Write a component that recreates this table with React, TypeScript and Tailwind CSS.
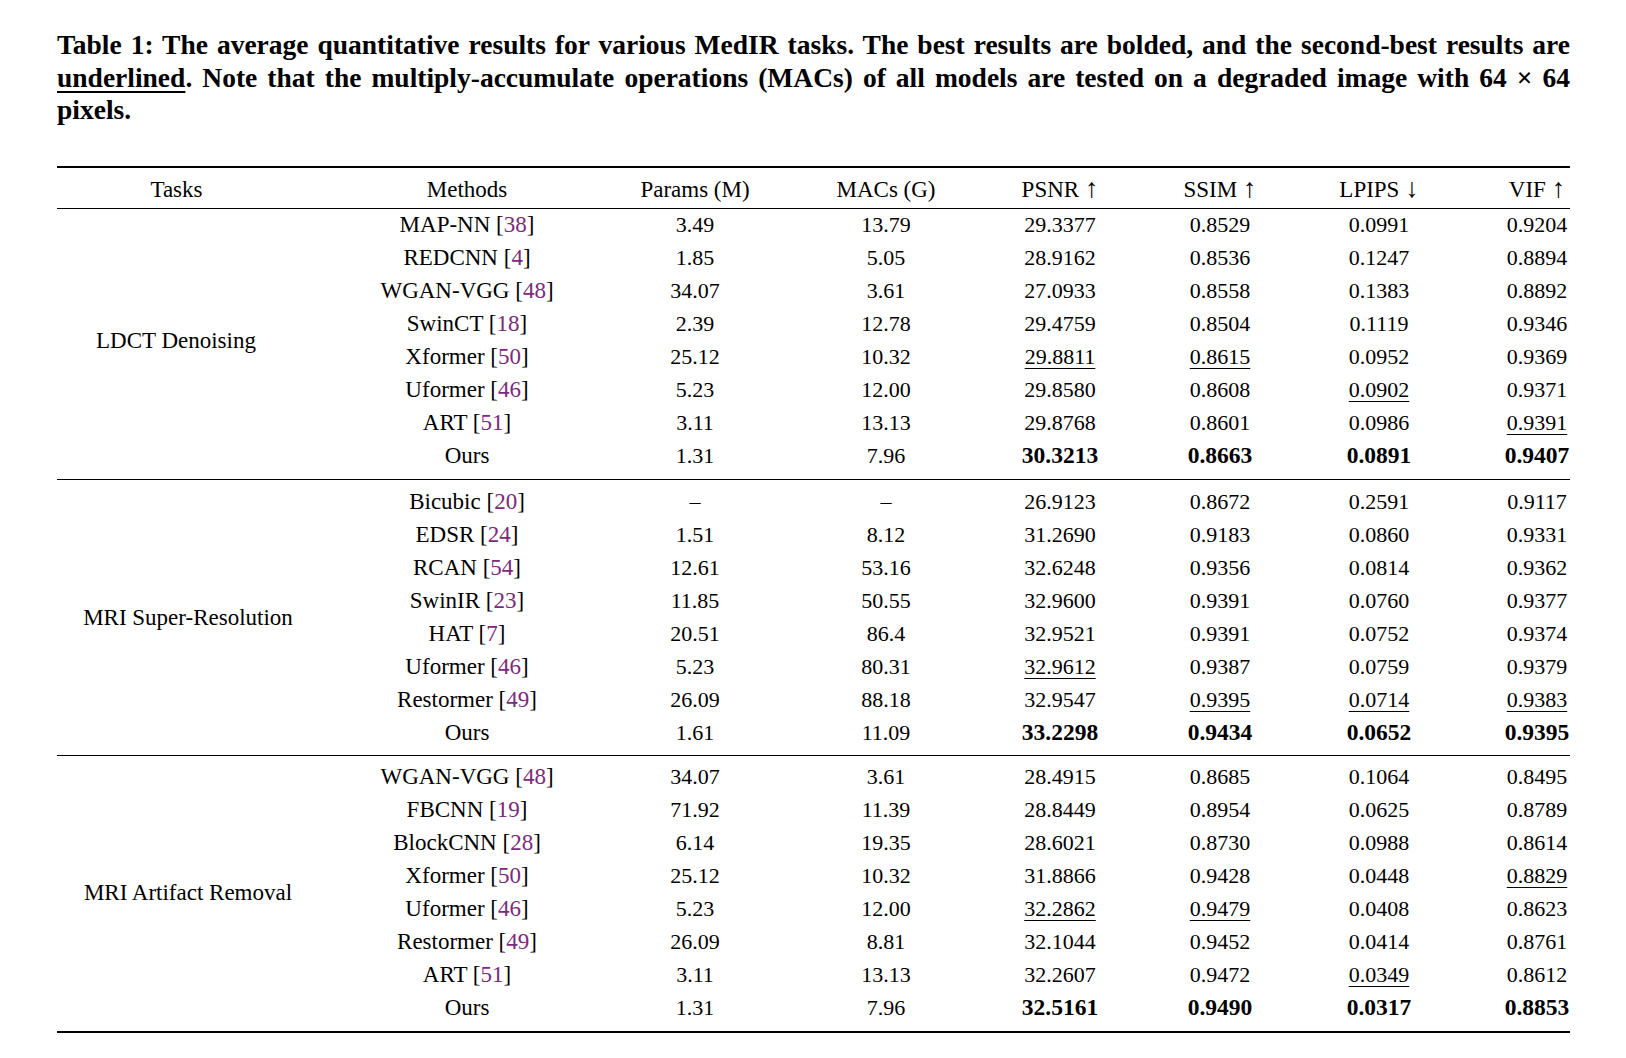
import React from "react";

type Row = { m: string; c?: string; v: string[] };
type Group = { task: string; shift: string; pad: string; rows: Row[] };

const groups: Group[] = [
  {
    task: "LDCT Denoising",
    shift: "pr-[12px]",
    pad: "pb-[6px]",
    rows: [
      { m: "MAP-NN", c: "38", v: ["3.49", "13.79", "29.3377", "0.8529", "0.0991", "0.9204"] },
      { m: "REDCNN", c: "4", v: ["1.85", "5.05", "28.9162", "0.8536", "0.1247", "0.8894"] },
      { m: "WGAN-VGG", c: "48", v: ["34.07", "3.61", "27.0933", "0.8558", "0.1383", "0.8892"] },
      { m: "SwinCT", c: "18", v: ["2.39", "12.78", "29.4759", "0.8504", "0.1119", "0.9346"] },
      { m: "Xformer", c: "50", v: ["25.12", "10.32", "_29.8811", "_0.8615", "0.0952", "0.9369"] },
      { m: "Uformer", c: "46", v: ["5.23", "12.00", "29.8580", "0.8608", "_0.0902", "0.9371"] },
      { m: "ART", c: "51", v: ["3.11", "13.13", "29.8768", "0.8601", "0.0986", "_0.9391"] },
      { m: "Ours", v: ["1.31", "7.96", "*30.3213", "*0.8663", "*0.0891", "*0.9407"] },
    ],
  },
  {
    task: "MRI Super-Resolution",
    shift: "pl-[12px]",
    pad: "pt-[6px] pb-[5px]",
    rows: [
      { m: "Bicubic", c: "20", v: ["–", "–", "26.9123", "0.8672", "0.2591", "0.9117"] },
      { m: "EDSR", c: "24", v: ["1.51", "8.12", "31.2690", "0.9183", "0.0860", "0.9331"] },
      { m: "RCAN", c: "54", v: ["12.61", "53.16", "32.6248", "0.9356", "0.0814", "0.9362"] },
      { m: "SwinIR", c: "23", v: ["11.85", "50.55", "32.9600", "0.9391", "0.0760", "0.9377"] },
      { m: "HAT", c: "7", v: ["20.51", "86.4", "32.9521", "0.9391", "0.0752", "0.9374"] },
      { m: "Uformer", c: "46", v: ["5.23", "80.31", "_32.9612", "0.9387", "0.0759", "0.9379"] },
      { m: "Restormer", c: "49", v: ["26.09", "88.18", "32.9547", "_0.9395", "_0.0714", "_0.9383"] },
      { m: "Ours", v: ["1.61", "11.09", "*33.2298", "*0.9434", "*0.0652", "*0.9395"] },
    ],
  },
  {
    task: "MRI Artifact Removal",
    shift: "pl-[12px]",
    pad: "pt-[5px] pb-[6px]",
    rows: [
      { m: "WGAN-VGG", c: "48", v: ["34.07", "3.61", "28.4915", "0.8685", "0.1064", "0.8495"] },
      { m: "FBCNN", c: "19", v: ["71.92", "11.39", "28.8449", "0.8954", "0.0625", "0.8789"] },
      { m: "BlockCNN", c: "28", v: ["6.14", "19.35", "28.6021", "0.8730", "0.0988", "0.8614"] },
      { m: "Xformer", c: "50", v: ["25.12", "10.32", "31.8866", "0.9428", "0.0448", "_0.8829"] },
      { m: "Uformer", c: "46", v: ["5.23", "12.00", "_32.2862", "_0.9479", "0.0408", "0.8623"] },
      { m: "Restormer", c: "49", v: ["26.09", "8.81", "32.1044", "0.9452", "0.0414", "0.8761"] },
      { m: "ART", c: "51", v: ["3.11", "13.13", "32.2607", "0.9472", "_0.0349", "0.8612"] },
      { m: "Ours", v: ["1.31", "7.96", "*32.5161", "*0.9490", "*0.0317", "*0.8853"] },
    ],
  },
];

// column widths & margins for columns 2..8 (column 1 is 250px)
const colCls = [
  "w-[280px] ml-[20px]",
  "w-[140px] ml-[18px]",
  "w-[140px] ml-[51px]",
  "w-[120px] ml-[44px]",
  "w-[120px] ml-[40px]",
  "w-[120px] ml-[39px]",
  "w-[66px] ml-[65px]",
];

function Val({ s }: { s: string }) {
  if (s.startsWith("_")) {
    return (
      <span className="text-[22px] underline decoration-1 underline-offset-[4px]">{s.slice(1)}</span>
    );
  }
  if (s.startsWith("*")) {
    return <span className="text-[23.5px] font-bold">{s.slice(1)}</span>;
  }
  return <span className="text-[22px]">{s}</span>;
}

function Cells({ cells }: { cells: React.ReactNode[] }) {
  return (
    <>
      {cells.map((c, i) => (
        <div key={i} className={`${colCls[i]} shrink-0 text-center whitespace-nowrap`}>
          {c}
        </div>
      ))}
    </>
  );
}

function Head({ t, a }: { t: string; a: string }) {
  return (
    <span>
      {t} <span className="text-[27px] leading-[0px] font-light">{a}</span>
    </span>
  );
}

export default function App() {
  return (
    <div
      className="w-[1626px] h-[1058px] bg-white text-black overflow-hidden"
      style={{ fontFamily: '"Liberation Serif", "Times New Roman", serif' }}
    >
      <div className="pl-[57px] w-[1570px]">
        {/* Caption */}
        <div className="pt-[29px] text-[27.5px] leading-[32.5px] font-bold">
          <div className="text-justify [text-align-last:justify]">
            Table 1: The average quantitative results for various MedIR tasks. The best results are bolded, and the second-best results are
          </div>
          <div className="text-justify [text-align-last:justify]">
            <span className="underline decoration-[1.5px] underline-offset-[4px]">underlined</span>. Note that the multiply-accumulate operations (MACs) of all models are tested on a degraded image with 64 × 64
          </div>
          <div>pixels.</div>
        </div>

        {/* Table */}
        <div className="mt-[39px] text-[23px] leading-[33px]">
          <div className="h-[2px] bg-black" />
          <div className="flex pt-[5px] h-[40px]">
            <div className="w-[250px] shrink-0 text-center pr-[11px]">Tasks</div>
            <Cells
              cells={[
                "Methods",
                "Params (M)",
                "MACs (G)",
                <Head key="p" t="PSNR" a="↑" />,
                <Head key="s" t="SSIM" a="↑" />,
                <Head key="l" t="LPIPS" a="↓" />,
                <Head key="v" t="VIF" a="↑" />,
              ]}
            />
          </div>
          <div className="h-[1px] bg-black" />
          {groups.map((g, gi) => (
            <React.Fragment key={gi}>
              <div className={`flex ${g.pad}`}>
                <div className={`w-[250px] shrink-0 flex items-center justify-center ${g.shift}`}>
                  {g.task}
                </div>
                <div className="flex flex-col">
                  {g.rows.map((r, ri) => (
                    <div key={ri} className="flex h-[33px] items-center pb-[2px]">
                      <Cells
                        cells={[
                          <span key="m">
                            {r.m}
                            {r.c && (
                              <>
                                {" "}[<span className="text-[#7a2a7c]">{r.c}</span>]
                              </>
                            )}
                          </span>,
                          ...r.v.map((s, i) => <Val key={i} s={s} />),
                        ]}
                      />
                    </div>
                  ))}
                </div>
              </div>
              <div className={gi === groups.length - 1 ? "h-[2px] bg-black" : "h-[1px] bg-black"} />
            </React.Fragment>
          ))}
        </div>
      </div>
    </div>
  );
}
